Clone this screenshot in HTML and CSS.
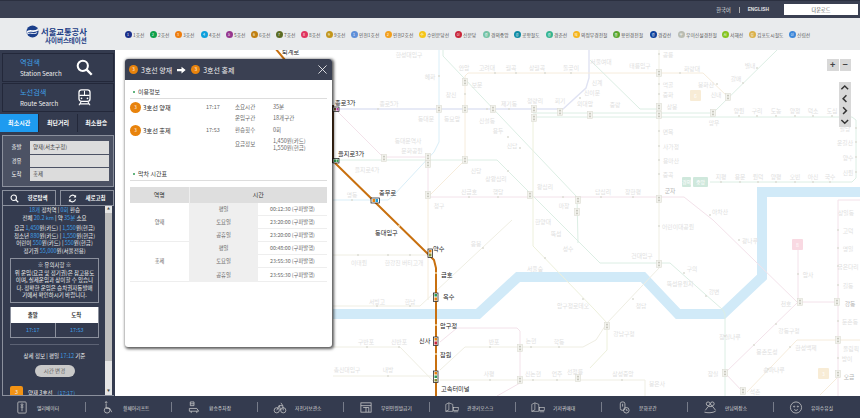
FILE: index.html
```html
<!DOCTYPE html>
<html>
  <head>
    <title>서울교통공사 사이버스테이션</title>
    <link rel="stylesheet" href="styles.css">
  </head>
  <body>
    <div class="page">
      <div class="topbar">
        <a class="lang">한국어</a>
        <span class="lang-sep"></span>
        <a class="lang en">ENGLISH</a>
        <button class="download">다운로드</button>
      </div>

      <div class="linebar">
        <div class="logo">
          <svg class="logo-mark" viewBox="0 0 14 14">
            <circle cx="7" cy="7" r="6.5" fill="#1b3f8b"/>
            <path d="M1 8 C4 4 8 9 13 5" stroke="#fff" stroke-width="1.8" fill="none"/>
            <path d="M1 10 C4 7 9 11 12 8" stroke="#fff" stroke-width="1" fill="none"/>
          </svg>
          <div class="logo-text">
            <div class="logo-name">서울교통공사</div>
            <div class="logo-sub">사이버스테이션</div>
          </div>
        </div>
        <ul class="lines">
          <li style="--w:25px"><i style="background:#1a2f8a">1</i>1호선</li>
          <li style="--w:25px"><i style="background:#0fa04a">2</i>2호선</li>
          <li style="--w:26px"><i style="background:#ee7d0d">3</i>3호선</li>
          <li style="--w:25px"><i style="background:#0d9fdc">4</i>4호선</li>
          <li style="--w:25px"><i style="background:#96378f">5</i>5호선</li>
          <li style="--w:25px"><i style="background:#c07f12">6</i>6호선</li>
          <li style="--w:25px"><i style="background:#5a6b23">7</i>7호선</li>
          <li style="--w:25px"><i style="background:#e0335e">8</i>8호선</li>
          <li style="--w:25px"><i style="background:#c2961b">9</i>9호선</li>
          <li style="--w:34px"><i style="background:#5f8fd8">1</i>인천1호선</li>
          <li style="--w:34px"><i style="background:#f3a01d">2</i>인천2호선</li>
          <li style="--w:36px"><i style="background:#f5c518">수</i>수인분당선</li>
          <li style="--w:28px"><i style="background:#c9263a">신</i>신분당</li>
          <li style="--w:31px"><i style="background:#73c2a4">경</i>경의중앙</li>
          <li style="--w:32px"><i style="background:#0d8aa3">공</i>공항철도</li>
          <li style="--w:27px"><i style="background:#35b48f">경</i>경춘선</li>
          <li style="--w:40px"><i style="background:#f5b41a">의</i>의정부경전철</li>
          <li style="--w:37px"><i style="background:#58a52e">용</i>용인경전철</li>
          <li style="--w:28px"><i style="background:#0b3f9c">경</i>경강선</li>
          <li style="--w:44px"><i style="background:#b9bcb2">우</i>우이신설경전철</li>
          <li style="--w:27px"><i style="background:#83c31e">서</i>서해선</li>
          <li style="--w:40px"><i style="background:#d9b04a">김</i>김포도시철도</li>
          <li><i style="background:#3d87d9">신</i>신림선</li>
        </ul>
      </div>

      <div class="main">
        <aside class="sidebar">
          <a class="search-card">
            <div>
              <div class="card-title">역검색</div>
              <div class="card-sub">Station Search</div>
            </div>
            <svg class="card-icon" viewBox="0 0 20 20">
              <circle cx="8" cy="8" r="6" fill="none" stroke="#fff" stroke-width="2.4"/>
              <path d="M12.5 12.5 L18.5 18.5" stroke="#fff" stroke-width="2.8"/>
            </svg>
          </a>
          <a class="search-card">
            <div>
              <div class="card-title">노선검색</div>
              <div class="card-sub">Route Search</div>
            </div>
            <svg class="card-icon" viewBox="0 0 20 20">
              <rect x="3.5" y="1" width="13" height="13.5" rx="3" fill="none" stroke="#fff" stroke-width="1.5"/>
              <path d="M4 7.5 H16 M10 2 V7.5" stroke="#fff" stroke-width="1.2"/>
              <circle cx="6.5" cy="11" r="1" fill="#fff"/>
              <circle cx="13.5" cy="11" r="1" fill="#fff"/>
              <path d="M6 15 L3.5 19 M14 15 L16.5 19 M5 17.5 H15" stroke="#fff" stroke-width="1.2"/>
            </svg>
          </a>

          <div class="tabs">
            <a class="tab active">최소시간</a>
            <a class="tab">최단거리</a>
            <a class="tab">최소환승</a>
          </div>

          <div class="route-form">
            <div class="form-row"><label>출발</label><div class="field">양재(서초구청)</div></div>
            <div class="form-row"><label>경유</label><div class="field"></div></div>
            <div class="form-row"><label>도착</label><div class="field">홍제</div></div>
          </div>

          <div class="form-actions">
            <button class="action">
              <svg viewBox="0 0 12 12"><circle cx="5" cy="5" r="3.6" fill="none" stroke="#fff" stroke-width="1.4"/><path d="M7.6 7.6 L11 11" stroke="#fff" stroke-width="1.6"/></svg>
              경로탐색
            </button>
            <button class="action">
              <svg viewBox="0 0 12 12"><path d="M2 5 A4.2 4.2 0 0 1 9.6 3.4 M10 7 A4.2 4.2 0 0 1 2.4 8.6" fill="none" stroke="#fff" stroke-width="1.5"/><path d="M10.8 1 V4.6 H7.4 Z M1.2 11 V7.4 H4.6 Z" fill="#fff"/></svg>
              새로고침
            </button>
          </div>

          <div class="result">
            <div class="result-body">
              <div class="summary">
                <p><b>18개</b> 정차역 | <b>0회</b> 환승</p>
                <p>전체 <b>20.2 km</b> | 약 <b>35분</b> 소요</p>
              </div>
              <div class="fares">
                <p>요금 <b>1,450</b>원(카드) | <b>1,550</b>원(현금)</p>
                <p>청소년 <b>880</b>원(카드) | <b>1,550</b>원(현금)</p>
                <p>어린이 <b>550</b>원(카드) | <b>550</b>원(현금)</p>
                <p>정기권 <b>55,000</b>원(서울전용)</p>
              </div>
              <div class="notice">
                <p>※ 유의사항 ※</p>
                <p>위 운임(요금 및 정기권)은 참고용도</p>
                <p>이며, 실제운임과 상이할 수 있습니</p>
                <p>다. 정확한 운임은 승차권자동발매</p>
                <p>기에서 확인하시기 바랍니다.</p>
              </div>
              <div class="times">
                <div class="times-head">출발</div>
                <div class="times-head">도착</div>
                <div class="times-cell">17:17</div>
                <div class="times-cell">17:53</div>
              </div>
              <div class="detail">상세 정보 | 평일 <b>17:12</b> 기준</div>
              <button class="change-time">시간 변경</button>
              <div class="step"><span class="step-no">3</span>양재 3호선 <b>(17:17)</b></div>
            </div>
            <div class="scroll">
              <span class="scroll-arrow">▲</span>
              <span class="scroll-thumb"></span>
              <span class="scroll-arrow">▼</span>
            </div>
          </div>
        </aside>

        <div class="map">
          <svg class="map-svg" viewBox="116 50 744 346">
            <defs>
              <g id="tf"><rect x="-2.5" y="-3.5" width="5" height="7" fill="#f3f3ee" stroke="#dcdcd4" stroke-width=".6"/><rect x="-1" y="-2.2" width="2" height="1.6" fill="#c9c9bf"/><rect x="-1" y=".6" width="2" height="1.6" fill="#c9c9bf"/></g>
            </defs>

            <polyline class="river" points="333,314 478,314 518,277 643,277 678,314 723,314 762,277 762,192 860,192"/>

            <polyline class="ln blue" points="337,109 563,109 586,88 589,78 589,50"/>
            <polyline class="ln sky" points="439,50 439,142 434,152 393,196 388,200 333,200"/>
            <polyline class="ln pink" points="337,111 383,157 428,157 428,197 684,197 713,220 797,302 838,302"/>
            <polyline class="ln pink" points="798,245 798,302 725,373 743,392"/>
            <polyline class="ln pink" points="860,200 838,200 838,396"/>
            <polyline class="ln pink" points="440,342 457,328 517,328 520,331 520,383 497,396"/>
            <polyline class="ln tan" points="428,300 428,197 465,160 465,76 468,73 703,73 728,97"/>
            <polyline class="ln green" points="337,160 497,160 600,263 670,263 723,310 725,314 725,396"/>
            <polyline class="ln green" points="443,50 443,56 577,197 578,243"/>
            <polyline class="ln green" points="590,60 640,109 659,109"/>
            <polyline class="ln green" points="533,113 713,113 777,50"/>
            <polyline class="ln green" points="533,117 852,117 856,120 856,178 852,182 710,182"/>
            <polyline class="ln olive" points="533,200 533,120 536,117"/>
            <polyline class="ln olive" points="533,200 533,246 595,310 607,323 607,350 590,368"/>
            <polyline class="ln beige" points="659,50 659,268 607,323"/>
            <polyline class="ln beige" points="333,255 428,255"/>
            <polyline class="ln beige" points="333,347 400,347 436,384"/>
            <polyline class="ln beige" points="333,376 436,376"/>
            <polyline class="ln beige" points="440,380 645,380 645,396"/>
            <polyline class="ln beige" points="440,370 465,347 583,347 596,340 607,323"/>
            <polyline class="ln beige" points="333,306 420,306 512,220"/>
            <polyline class="ln tan" points="747,392 797,340 860,340"/>
            <polyline class="ln tan" points="820,395 838,377"/>

            <g class="faint-dots">
              <circle cx="439" cy="76" r="1"/><circle cx="378" cy="109" r="1"/><circle cx="487" cy="109" r="1"/><circle cx="509" cy="109" r="1"/><circle cx="465" cy="94" r="1"/><circle cx="495" cy="73" r="1"/><circle cx="516" cy="73" r="1"/><circle cx="545" cy="73" r="1"/><circle cx="571" cy="73" r="1"/><circle cx="580" cy="98" r="1"/><circle cx="352" cy="200" r="1"/><circle cx="469" cy="197" r="1"/><circle cx="498" cy="197" r="1"/><circle cx="508" cy="137" r="1"/><circle cx="520" cy="148" r="1"/><circle cx="508" cy="171" r="1"/><circle cx="563" cy="197" r="1"/><circle cx="601" cy="197" r="1"/><circle cx="633" cy="197" r="1"/><circle cx="710" cy="215" r="1"/><circle cx="739" cy="116" r="1"/><circle cx="757" cy="116" r="1"/><circle cx="776" cy="116" r="1"/><circle cx="795" cy="116" r="1"/><circle cx="813" cy="116" r="1"/><circle cx="832" cy="116" r="1"/><circle cx="856" cy="128" r="1"/><circle cx="856" cy="142" r="1"/><circle cx="856" cy="157" r="1"/><circle cx="856" cy="172" r="1"/><circle cx="830" cy="182" r="1"/><circle cx="813" cy="182" r="1"/><circle cx="795" cy="182" r="1"/><circle cx="776" cy="182" r="1"/><circle cx="758" cy="182" r="1"/><circle cx="740" cy="182" r="1"/><circle cx="721" cy="182" r="1"/><circle cx="659" cy="54" r="1"/><circle cx="659" cy="84" r="1"/><circle cx="659" cy="94" r="1"/><circle cx="659" cy="131" r="1"/><circle cx="659" cy="146" r="1"/><circle cx="659" cy="160" r="1"/><circle cx="659" cy="174" r="1"/><circle cx="659" cy="226" r="1"/><circle cx="680" cy="73" r="1"/><circle cx="717" cy="84" r="1"/><circle cx="743" cy="83" r="1"/><circle cx="757" cy="68" r="1"/><circle cx="838" cy="230" r="1"/><circle cx="838" cy="248" r="1"/><circle cx="838" cy="266" r="1"/><circle cx="838" cy="285" r="1"/><circle cx="838" cy="321" r="1"/><circle cx="838" cy="358" r="1"/><circle cx="798" cy="274" r="1"/><circle cx="739" cy="240" r="1"/><circle cx="684" cy="273" r="1"/><circle cx="706" cy="296" r="1"/><circle cx="633" cy="299" r="1"/><circle cx="725" cy="336" r="1"/><circle cx="776" cy="324" r="1"/><circle cx="754" cy="345" r="1"/><circle cx="768" cy="369" r="1"/><circle cx="790" cy="347" r="1"/><circle cx="358" cy="255" r="1"/><circle cx="388" cy="255" r="1"/><circle cx="410" cy="255" r="1"/><circle cx="377" cy="306" r="1"/><circle cx="410" cy="306" r="1"/><circle cx="367" cy="347" r="1"/><circle cx="399" cy="347" r="1"/><circle cx="388" cy="376" r="1"/><circle cx="490" cy="347" r="1"/><circle cx="531" cy="347" r="1"/><circle cx="559" cy="347" r="1"/><circle cx="490" cy="380" r="1"/><circle cx="533" cy="380" r="1"/><circle cx="557" cy="380" r="1"/><circle cx="622" cy="380" r="1"/><circle cx="483" cy="248" r="1"/><circle cx="545" cy="258" r="1"/><circle cx="583" cy="299" r="1"/>
            </g>

            <g>
              <use href="#tf" x="439" y="109"/><use href="#tf" x="465" y="109"/><use href="#tf" x="493" y="109"/><use href="#tf" x="534" y="109"/><use href="#tf" x="534" y="118"/><use href="#tf" x="560" y="112"/>
              <use href="#tf" x="465" y="82"/><use href="#tf" x="384" y="158"/><use href="#tf" x="428" y="157"/><use href="#tf" x="428" y="164"/><use href="#tf" x="465" y="160"/><use href="#tf" x="428" y="195"/><use href="#tf" x="530" y="195"/>
              <use href="#tf" x="659" y="73"/><use href="#tf" x="659" y="107"/><use href="#tf" x="659" y="115"/><use href="#tf" x="590" y="115"/><use href="#tf" x="713" y="113"/><use href="#tf" x="728" y="97"/><use href="#tf" x="659" y="199"/>
              <use href="#tf" x="659" y="264"/><use href="#tf" x="520" y="348"/><use href="#tf" x="520" y="380"/><use href="#tf" x="837" y="302"/><use href="#tf" x="838" y="340"/><use href="#tf" x="838" y="374"/><use href="#tf" x="725" y="373"/><use href="#tf" x="743" y="391"/><use href="#tf" x="800" y="302"/><use href="#tf" x="607" y="326"/><use href="#tf" x="578" y="200"/><use href="#tf" x="577" y="212"/><use href="#tf" x="578" y="378"/>
            </g>

            <rect class="badge tan-badge" x="690" y="90" width="11" height="11" rx="1"/>
            <text class="badge-text" x="695.5" y="98">6</text>
            <rect class="badge pink-badge" x="792" y="239" width="11" height="11" rx="1"/>
            <text class="badge-text" x="797.5" y="247">8</text>
            <rect class="badge tan-badge" x="818" y="368" width="11" height="11" rx="1"/>
            <text class="badge-text" x="823.5" y="376">3</text>
            <rect class="badge green-badge" x="682" y="177" width="9" height="10" rx="1"/>
            <rect class="badge green-badge" x="693" y="177" width="15" height="10" rx="1"/>
            <text class="badge-text" x="686.5" y="184">경의</text>
            <text class="badge-text" x="700.5" y="184">중앙</text>

            <g class="faint">
              <text x="409" y="57">한성대입구</text><text x="430" y="79">혜화</text><text x="464" y="70">안암</text><text x="487" y="70">고려대</text><text x="511" y="70">월곡</text><text x="537" y="70">상월곡</text><text x="571" y="70">돌곶이</text><text x="477" y="87">보문</text><text x="451" y="97">창신</text><text x="389" y="106">종로5가</text><text x="426" y="121">동대문</text><text x="452" y="121">동묘앞</text><text x="487" y="123">신설동</text><text x="509" y="106">제기동</text><text x="535" y="103">청량리</text><text x="560" y="103">회기</text><text x="585" y="106">외대앞</text><text x="498" y="133">용두</text><text x="512" y="148">신답</text><text x="408" y="143">동대문역사</text><text x="412" y="153">문화공원</text><text x="367" y="172">을지로4가</text><text x="476" y="173">신당</text><text x="496" y="181">상왕십리</text><text x="545" y="189">왕십리</text><text x="564" y="208">마장</text><text x="469" y="194">신금호</text><text x="498" y="194">행당</text><text x="439" y="208">청구</text><text x="352" y="197">명동</text>
              <text x="543" y="224">한양대</text><text x="556" y="236">뚝섬</text><text x="568" y="251">성수</text><text x="476" y="246">응봉</text><text x="535" y="271">서울숲</text><text x="573" y="308">압구정로데오</text><text x="494" y="344">반포</text><text x="531" y="343">논현</text><text x="559" y="344">학동</text><text x="366" y="344">구반포</text><text x="399" y="344">신반포</text><text x="489" y="376">사평</text><text x="533" y="376">신논현</text><text x="557" y="376">언주</text><text x="575" y="374">선정릉</text><text x="388" y="372">내방</text><text x="347" y="372">총신대입구</text><text x="359" y="265">이태원</text><text x="404" y="265">한강진 버티고개</text><text x="377" y="304">서빙고</text><text x="410" y="304">한남</text>
              <text x="668" y="57">공릉</text><text x="668" y="87">먹골</text><text x="668" y="97">중화</text><text x="672" y="109">상봉</text><text x="668" y="134">면목</text><text x="671" y="149">사가정</text><text x="671" y="163">용마산</text><text x="668" y="177">중곡</text><text x="670" y="193" class="dark">군자</text><text x="678" y="229">어린이대공원</text><text x="720" y="214">아차산</text><text x="640" y="68">태릉입구</text><text x="692" y="71">화랑대</text><text x="706" y="87">봉화산</text><text x="716" y="97">신내</text><text x="736" y="81">갈매</text><text x="750" y="68">별내</text><text x="714" y="125">망우</text><text x="739" y="113">양원</text><text x="757" y="113">구리</text><text x="776" y="113">도농</text><text x="795" y="113">양정</text><text x="813" y="113">덕소</text><text x="832" y="113">도심</text><text x="845" y="131">팔당</text><text x="845" y="145">운길산</text><text x="848" y="160">양수</text><text x="848" y="175">신원</text><text x="830" y="179">국수</text><text x="813" y="179">아신</text><text x="795" y="179">오빈</text><text x="776" y="179">양평</text><text x="758" y="179">원덕</text><text x="740" y="179">용문</text><text x="721" y="179">지평</text><text x="603" y="194">답십리</text><text x="633" y="194">장한평</text><text x="601" y="64">서울여대</text><text x="597" y="85">신계</text><text x="592" y="95">신이문</text><text x="615" y="107">중랑</text>
              <text x="642" y="258">건대입구</text><text x="680" y="286">뚝섬유원지</text><text x="692" y="271">구의</text><text x="714" y="294">강변</text><text x="641" y="308">청담</text><text x="624" y="336">강남구청</text><text x="730" y="339">잠실나루</text><text x="713" y="376">잠실</text><text x="789" y="333">강동구청</text><text x="767" y="354">몽촌토성</text><text x="774" y="372">송파나루</text><text x="806" y="350">한성백제</text><text x="623" y="376">삼성중앙</text><text x="657" y="386">봉은사</text><text x="755" y="394">석촌</text><text x="786" y="306">천호</text><text x="808" y="277">암사</text><text x="750" y="243">광나루</text><text x="850" y="306" class="dark">강동</text><text x="848" y="288">길동</text><text x="848" y="269">굽은다리</text><text x="848" y="251">명일</text><text x="848" y="233">고덕</text><text x="850" y="324">둔촌동</text><text x="851" y="351">올림픽</text><text x="847" y="361">방이</text><text x="849" y="379" class="dark">오금</text><text x="846" y="215">상일동</text>
            </g>

            <polyline class="ln brown" points="333,105 333,163"/>
            <polyline class="route" points="270,42 290,66"/>
            <polyline class="route" points="335,163 429,255 434,260 436,268 436,396"/>
            <g class="route-dots">
              <circle cx="399" cy="226" r="1"/><circle cx="436" cy="273" r="1"/><circle cx="436" cy="325" r="1"/><circle cx="436" cy="354" r="1"/>
            </g>

            <g class="stop">
              <rect x="333" y="107" width="6" height="4.5"/><rect class="brown-s" x="334" y="108" width="2" height="2.5"/><rect class="purple-s" x="336.5" y="108" width="2" height="2.5"/>
              <rect x="333" y="158.500" width="6" height="4.5"/><rect class="green-s" x="334" y="159.500" width="2" height="2.5"/><rect class="green-s" x="336.500" y="159.500" width="2" height="2.5"/>
              <rect x="371" y="198" width="8.500" height="5"/><rect class="orange-s" x="372.500" y="199" width="2.500" height="3"/><rect class="sky-s" x="375.500" y="199" width="2.500" height="3"/>
              <rect x="428" y="249" width="4.500" height="8.500"/><rect class="orange-s" x="429" y="250" width="2.500" height="2.500"/><rect class="olive-s" x="429" y="253.500" width="2.500" height="3"/>
              <rect x="433.500" y="293" width="4.500" height="8.500"/><rect class="green-s" x="434.500" y="294" width="2.500" height="2.500"/><rect class="orange-s" x="434.500" y="297.500" width="2.500" height="3"/>
              <rect x="433.500" y="337" width="4.500" height="8.500"/><rect class="orange-s" x="434.500" y="338" width="2.500" height="2.500"/><rect class="red-s" x="434.500" y="341.500" width="2.500" height="3"/>
              <rect x="433.500" y="371" width="4.500" height="11.500"/><rect class="orange-s" x="434.500" y="372" width="2.500" height="2.500"/><rect class="green-s" x="434.500" y="375.500" width="2.500" height="2.500"/><rect class="olive-s" x="434.500" y="379" width="2.500" height="2.500"/>
            </g>

            <g class="active">
              <text x="335" y="105">종로3가</text><text x="338" y="156">을지로3가</text><text x="379" y="195">충무로</text><text x="375" y="235">동대입구</text><text x="433" y="251">약수</text><text x="441" y="277">금호</text><text x="443" y="299">옥수</text><text x="440" y="328">압구정</text><text x="419" y="343">신사</text><text x="440" y="357">잠원</text><text x="441" y="391">고속터미널</text><text x="282" y="54">퇴계로</text>
            </g>
          </svg>

          <div class="zoom-ctl">
            <span>+</span><span>−</span>
          </div>
          <div class="pan-ctl">
            <svg viewBox="0 0 10 10"><path d="M2 6.500 L5 3.500 L8 6.500"/></svg>
            <svg viewBox="0 0 10 10"><path d="M6.500 2 L3.500 5 L6.500 8"/></svg>
            <svg viewBox="0 0 10 10"><path d="M3.500 2 L6.500 5 L3.500 8"/></svg>
            <svg viewBox="0 0 10 10"><path d="M2 3.500 L5 6.500 L8 3.500"/></svg>
          </div>

          <div class="popup">
            <div class="popup-head">
              <span class="num">3</span><span class="head-name">3호선 양재</span>
              <svg class="head-arrow" viewBox="0 0 12 10"><path d="M0 3.500 H6 V0.500 L11.500 5 L6 9.500 V6.500 H0 Z" fill="#fff"/></svg>
              <span class="num">3</span><span class="head-name">3호선 홍제</span>
              <svg class="head-close" viewBox="0 0 10 10"><path d="M0.500 0.500 L9.500 9.500 M9.500 0.500 L0.500 9.500" stroke="#fff" stroke-width="0.9"/></svg>
            </div>
            <div class="popup-body">
              <h3 class="sec-title">이용정보</h3>
              <div class="info">
                <div class="stn"><span class="num">3</span>3호선 양재</div>
                <div class="tm">17:17</div>
                <div class="lbl">소요시간</div>
                <div class="val">35분</div>
                <div></div>
                <div></div>
                <div class="lbl">운임구간</div>
                <div class="val">18개구간</div>
                <div class="stn"><span class="num">3</span>3호선 홍제</div>
                <div class="tm">17:53</div>
                <div class="lbl">환승횟수</div>
                <div class="val">0회</div>
                <div></div>
                <div></div>
                <div class="lbl">요금정보</div>
                <div class="val">1,450원(카드)<br>1,550원(현금)</div>
              </div>
              <h3 class="sec-title second">막차 시간표</h3>
              <table class="last-train">
                <tr>
                  <th class="col-stn">역명</th>
                  <th colspan="2">시간</th>
                </tr>
                <tr><td rowspan="3">양재</td><td class="day">평일</td><td>00:12:30 (구파발행)</td></tr>
                <tr><td class="day">토요일</td><td>23:20:00 (구파발행)</td></tr>
                <tr><td class="day">공휴일</td><td>23:20:00 (구파발행)</td></tr>
                <tr><td rowspan="3">홍제</td><td class="day">평일</td><td>00:48:00 (구파발행)</td></tr>
                <tr><td class="day">토요일</td><td>23:55:30 (구파발행)</td></tr>
                <tr><td class="day">공휴일</td><td>23:55:30 (구파발행)</td></tr>
              </table>
            </div>
          </div>
        </div>
      </div>

      <div class="footer">
        <a class="facility">
          <svg viewBox="0 0 14 14"><rect x="2.500" y="1" width="9" height="12" rx="1"/><circle cx="7" cy="4" r="1"/><path d="M7 5.500 V11 M5.500 6.500 H8.500"/></svg>
          <span>엘리베이터</span>
        </a>
        <a class="facility">
          <svg viewBox="0 0 14 14"><circle cx="5" cy="1.500" r="0.800"/><path d="M5 3 V8 H9 L11 12"/><circle cx="6" cy="10" r="3"/></svg>
          <span>휠체어리프트</span>
        </a>
        <a class="facility">
          <svg viewBox="0 0 14 14"><path d="M3 1 H7 V5 H3 Z M3 3 H7"/><path d="M2 8 H10 L12 11 H2 Z M4 13 V11 M10 13 V11"/></svg>
          <span>환승주차장</span>
        </a>
        <a class="facility">
          <svg viewBox="0 0 14 14"><circle cx="3.500" cy="10" r="2.800"/><circle cx="10.500" cy="10" r="2.800"/><path d="M3.500 10 L6 5 H10 L10.500 10 M6 5 L8 10 M8 2 L10 5"/></svg>
          <span>자전거보관소</span>
        </a>
        <a class="facility">
          <svg viewBox="0 0 14 14"><rect x="1.500" y="2" width="11" height="10"/><path d="M1.500 5 H12.500 M4 7 H10 V12 M7 7 V12"/></svg>
          <span>무인민원발급기</span>
        </a>
        <a class="facility">
          <svg viewBox="0 0 18 14"><path d="M1 3 L5 1 L10 3 V12 H1 Z M5 1 V10 M1 12 L5 10"/><rect x="11" y="7" width="6" height="4"/><path d="M11 12.500 H17"/></svg>
          <span>관광키오스크</span>
        </a>
        <a class="facility">
          <svg viewBox="0 0 18 14"><path d="M1 3 L5 1 L10 3 V12 H1 Z M5 1 V10 M1 12 L5 10"/><rect x="11" y="7" width="6" height="4"/><path d="M11 12.500 H17"/></svg>
          <span>기저귀매대</span>
        </a>
        <a class="facility">
          <svg viewBox="0 0 14 14"><rect x="3" y="1" width="5" height="9" rx="2"/><path d="M5.500 3 V6"/><circle cx="9.500" cy="10" r="3"/><path d="M9.500 8.500 V10 H11"/></svg>
          <span>문화공간</span>
        </a>
        <a class="facility">
          <svg viewBox="0 0 14 14"><circle cx="5" cy="3" r="2"/><circle cx="9.500" cy="3" r="2"/><path d="M2 10 L5 6 H10 L13 10 M1 12 C4 13 10 13 13 11"/></svg>
          <span>만남의장소</span>
        </a>
        <a class="facility">
          <svg viewBox="0 0 14 14"><circle cx="7" cy="7" r="6"/><circle cx="5" cy="6" r="0.600"/><circle cx="9" cy="6" r="0.600"/><path d="M5 9 C6 10.500 8 10.500 9 9"/></svg>
          <span>유아수유실</span>
        </a>
      </div>
    </div>
  </body>
</html>
```

FILE: styles.css
```css
:root {
  --navy: #343b4f;
  --navy-dark: #23283a;
  --line: #8b909d;
  --blue: #3f9fe6;
  --orange: #e8830c;
  --text: #333;
}

* {
  margin: 0;
  padding: 0;
  box-sizing: border-box;
}

body {
  width: 860px;
  height: 418px;
  overflow: hidden;
  font-family: "Noto Sans CJK KR", "Noto Sans", sans-serif;
  color: var(--text);
  background: #fff;
}

.page {
  display: flex;
  flex-direction: column;
  height: 418px;
}

/* top bar */

.topbar {
  height: 18px;
  background: #3a4052;
  border-top: 1px solid #2b3040;
  display: flex;
  align-items: center;
  justify-content: flex-end;
  padding-right: 2px;
  color: #e6e6e6;
  font-size: 5.200px;
}

.lang.en {
  font-family: "Liberation Sans", sans-serif;
  font-size: 4.800px;
  font-weight: bold;
}

.lang-sep {
  width: 1px;
  height: 6px;
  background: #aaa;
  margin: 0 8px;
}

.download {
  width: 74px;
  height: 11px;
  margin-left: 15px;
  background: #fff;
  border: none;
  font: inherit;
  color: #555;
}

/* line legend */

.linebar {
  height: 32px;
  background: #e9ebed;
  display: flex;
  align-items: center;
}

.logo {
  width: 124.500px;
  display: flex;
  align-items: flex-start;
  padding-left: 26px;
}

.logo-mark {
  width: 13px;
  height: 13px;
}

.logo-text {
  margin-left: 2px;
  text-align: right;
  color: #1c3d85;
  font-weight: bold;
  line-height: 1;
}

.logo-name {
  font-size: 8.300px;
  margin-top: 2px;
  white-space: nowrap;
}

.logo-sub {
  font-size: 6.500px;
  margin-top: 1.500px;
  white-space: nowrap;
}

.lines {
  list-style: none;
  display: flex;
  align-items: center;
  font-size: 4.800px;
  color: #555;
}

.lines li {
  display: flex;
  align-items: center;
  gap: 1.500px;
  width: var(--w);
  white-space: nowrap;
}

.lines i {
  flex: none;
  width: 7px;
  height: 7px;
  border-radius: 50%;
  color: #fff;
  font-size: 3.500px;
  font-style: normal;
  line-height: 7px;
  text-align: center;
}

/* main area */

.main {
  flex: 1;
  min-height: 0;
  display: flex;
}

.sidebar {
  width: 116px;
  background: var(--navy);
  border-right: 1px solid #fff;
  display: flex;
  flex-direction: column;
  padding: 3px 1px 0 2px;
  color: #fff;
}

.search-card {
  height: 29px;
  margin-bottom: 1px;
  padding: 0 20px 0 17px;
  border: 1px solid var(--navy-dark);
  display: flex;
  align-items: center;
  justify-content: space-between;
}

.card-title {
  font-size: 7.200px;
  line-height: 11px;
  color: var(--blue);
}

.card-sub {
  font-size: 6.200px;
  line-height: 11px;
  color: #eee;
  white-space: nowrap;
}

.card-icon {
  width: 17px;
  height: 17px;
}

.tabs {
  display: grid;
  grid-template-columns: repeat(3, 1fr);
  margin: 1px -1px 3px -2px;
  height: 18px;
}

.tab {
  font-size: 6px;
  font-weight: bold;
  line-height: 18px;
  text-align: center;
  border-left: 1px solid var(--navy-dark);
}

.tab.active {
  background: #1e9bf0;
  border-left: none;
}

.route-form {
  height: 52px;
  background: #4c5264;
  border: 1px solid var(--line);
  padding: 5px 4px 0 0;
  display: flex;
  flex-direction: column;
  gap: 1px;
}

.form-row {
  display: flex;
  align-items: center;
  height: 12.500px;
}

.form-row label {
  width: 27px;
  text-align: center;
  font-size: 5.500px;
}

.field {
  flex: 1;
  height: 100%;
  background: #dcdcdc;
  color: #444;
  font-size: 5.500px;
  line-height: 12.500px;
  padding-left: 3px;
}

.form-actions {
  display: flex;
  justify-content: space-between;
  margin-top: 3px;
}

.action {
  width: 54px;
  height: 15px;
  background: transparent;
  border: 1px solid var(--line);
  border-bottom: none;
  color: #fff;
  font: inherit;
  font-size: 5.500px;
  font-weight: bold;
  display: flex;
  align-items: center;
  justify-content: center;
  gap: 8px;
}

.action svg {
  width: 9px;
  height: 9px;
}

.result {
  flex: 1;
  min-height: 0;
  border: 1px solid var(--line);
  border-right: none;
  display: flex;
  overflow: hidden;
}

.result-body {
  flex: 1;
  min-width: 0;
  overflow: hidden;
  font-size: 5.500px;
  text-align: center;
  padding: 1px 6px 0 7px;
  color: #eee;
}

.result-body b {
  font-weight: normal;
  color: var(--blue);
}

.result-body p {
  white-space: nowrap;
}

.summary p {
  line-height: 7.500px;
}

.fares {
  margin-top: 3px;
}

.fares p {
  line-height: 7.600px;
}

.notice {
  margin-top: 3px;
  height: 45px;
  border: 1px solid var(--line);
  padding-top: 3px;
}

.notice p {
  line-height: 7.400px;
}

.times {
  display: grid;
  grid-template-columns: 1fr 1fr;
  margin-top: 4px;
  border: 1px solid var(--line);
  border-top: none;
}

.times-head {
  background: #fff;
  color: #333;
  height: 16px;
  line-height: 16px;
  font-weight: bold;
}

.times-cell {
  height: 14px;
  line-height: 14px;
  color: var(--blue);
}

.times-cell + .times-cell {
  border-left: 1px solid var(--line);
}

.detail {
  margin-top: 6px;
  padding-top: 7px;
  border-top: 1px solid #5c6274;
  line-height: 8px;
}

.change-time {
  display: block;
  width: 40px;
  height: 12px;
  margin: 5px auto 0;
  border: none;
  border-radius: 6px;
  background: #c9c9c9;
  color: #666;
  font: inherit;
  font-size: 5.500px;
}

.step {
  display: flex;
  align-items: center;
  margin-top: 9px;
  gap: 5px;
  white-space: nowrap;
}

.step-no {
  flex: none;
  width: 13px;
  height: 13px;
  background: #f39314;
  border-radius: 2px;
  line-height: 13px;
  text-align: center;
}

.scroll {
  flex: none;
  width: 7px;
  background: #e6e6e6;
  display: flex;
  flex-direction: column;
  margin-right: 2px;
}

.scroll-arrow {
  height: 7px;
  font-size: 3px;
  line-height: 7px;
  text-align: center;
  color: #444;
}

.scroll-thumb {
  height: 148px;
  background: #bdbdbd;
}

.scroll-arrow:last-child {
  margin-top: auto;
}

/* map */

.map {
  flex: 1;
  position: relative;
  overflow: hidden;
}

.map-svg {
  display: block;
  width: 100%;
  height: 100%;
}

.river {
  fill: none;
  stroke: #d1eaf8;
  stroke-width: 10;
}

.ln {
  fill: none;
  stroke-width: 1;
}

.blue { stroke: #e0e3f3; stroke-width: 1.400; }
.sky { stroke: #d9eef8; }
.pink { stroke: #f3e2ea; }
.tan { stroke: #f6ecdc; }
.green { stroke: #dceee4; }
.olive { stroke: #edf0dc; }
.beige { stroke: #efeee3; }
.brown { stroke: #5a3a20; stroke-width: 2; }

.route {
  fill: none;
  stroke: #c8700f;
  stroke-width: 2;
}

.route-dots circle {
  fill: #f6d9a8;
}

.faint-dots circle {
  fill: #dcdcd4;
}

.faint text,
.active text,
.badge-text {
  font-size: 5.800px;
  text-anchor: middle;
}

.faint text {
  fill: #e0e0e0;
}

.faint text.dark {
  fill: #b4b4b4;
}

.active text {
  fill: #222;
  font-size: 6.200px;
  text-anchor: start;
}

.badge-text {
  fill: #fff;
  font-size: 5px;
}

.tan-badge { fill: #f8ecd6; }
.pink-badge { fill: #f9d9e2; }
.green-badge { fill: #cfe8dc; }

.stop > rect {
  fill: #fff;
  stroke: #111;
  stroke-width: 0.700;
}

.stop .orange-s { fill: #e8830c; stroke: none; }
.stop .green-s { fill: #2f9b55; stroke: none; }
.stop .brown-s { fill: #6b4a2a; stroke: none; }
.stop .purple-s { fill: #b23fa0; stroke: none; }
.stop .sky-s { fill: #1f9fdc; stroke: none; }
.stop .olive-s { fill: #8a8f2e; stroke: none; }
.stop .red-s { fill: #c9263a; stroke: none; }

.zoom-ctl {
  position: absolute;
  top: 9px;
  left: 711px;
  display: flex;
  gap: 1px;
}

.zoom-ctl span {
  width: 11.500px;
  height: 12px;
  background: #d8d8d8;
  color: #444;
  font-size: 9px;
  font-weight: bold;
  line-height: 12px;
  text-align: center;
}

.pan-ctl {
  position: absolute;
  top: 32px;
  left: 723px;
  display: flex;
  flex-direction: column;
}

.pan-ctl svg {
  display: block;
  width: 11.500px;
  height: 11.250px;
  background: #d8d8d8;
}

.pan-ctl path {
  fill: none;
  stroke: #333;
  stroke-width: 1.300;
}

/* route popup */

.popup {
  position: absolute;
  top: 9px;
  left: 9px;
  width: 207px;
  height: 288px;
  background: #fff;
  border-radius: 3px;
  box-shadow: 1px 1px 3px 1px rgba(0, 0, 0, 0.65);
  overflow: hidden;
}

.popup-head {
  height: 21px;
  background: #3a4052;
  color: #eee;
  display: flex;
  align-items: center;
  padding: 0 4px 0 4px;
  font-size: 7px;
}

.num {
  flex: none;
  width: 9px;
  height: 9px;
  border-radius: 50%;
  background: var(--orange);
  color: #fff;
  font-size: 4.500px;
  line-height: 9px;
  text-align: center;
}

.head-name {
  margin-left: 3px;
  white-space: nowrap;
}

.head-arrow {
  width: 9px;
  height: 8px;
  margin: 0 5px;
}

.head-close {
  width: 9px;
  height: 9px;
  margin-left: auto;
  margin-right: 1px;
}

.popup-body {
  padding: 0 5px;
}

.sec-title {
  height: 18.500px;
  padding: 7px 0 0 8px;
  border-bottom: 1px solid #ddd;
  font-size: 6px;
  font-weight: normal;
  line-height: 9px;
  position: relative;
}

.sec-title::before {
  content: "";
  position: absolute;
  left: 3px;
  top: 10.500px;
  width: 2px;
  height: 2px;
  border-radius: 50%;
  background: #2f9b55;
}

.sec-title.second {
  margin-top: 9px;
}

.info {
  display: grid;
  grid-template-columns: 76px 29px 38px 1fr;
  grid-template-rows: 11.500px 11.500px 11.500px 17px;
  align-items: center;
  margin-top: 3px;
  font-size: 5.500px;
  line-height: 11.500px;
  color: #666;
}

.stn {
  display: flex;
  align-items: center;
  gap: 2px;
  font-size: 6.200px;
  color: #222;
  white-space: nowrap;
}

.stn .num {
  width: 11px;
  height: 11px;
  line-height: 11px;
}

.val {
  white-space: nowrap;
}

.info .val:last-child {
  line-height: 6.800px;
}

.last-train {
  width: 197px;
  margin-top: 6px;
  border-collapse: collapse;
  table-layout: fixed;
  font-size: 5.300px;
  color: #666;
  text-align: center;
}

.last-train th {
  height: 16px;
  background: #dedede;
  color: #333;
  font-weight: normal;
  font-size: 6px;
  border-left: 1px solid #eee;
}

.last-train th.col-stn {
  width: 59px;
  border-left: none;
}

.last-train td {
  height: 13.100px;
  padding: 0;
  border-bottom: 1px solid #eee;
}

.last-train td.day {
  width: 41px;
  background: #efefef;
  border-bottom-color: #efefef;
}

/* facilities */

.footer {
  height: 22px;
  background: var(--navy);
  display: grid;
  grid-template-columns: repeat(10, 86px);
  align-items: center;
}

.facility {
  height: 10px;
  padding-left: 15px;
  border-right: 1px solid #777c8a;
  display: flex;
  align-items: center;
  gap: 8px;
  color: #dcdcdc;
  font-size: 4.800px;
  white-space: nowrap;
}

.facility:last-child {
  border-right: none;
}

.facility svg {
  flex: none;
  width: 14px;
  height: 13px;
  fill: none;
  stroke: #cfcfcf;
  stroke-width: 0.800;
}
```
